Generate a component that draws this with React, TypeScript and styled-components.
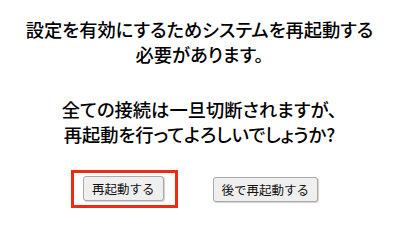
import React from 'react'
import styled, { createGlobalStyle } from 'styled-components'

const GlobalStyle = createGlobalStyle`
  html, body {
    margin: 0;
    padding: 0;
    background: #fff;
  }
  body {
    font-family: "Noto Sans CJK JP", "Liberation Sans", sans-serif;
    color: #000;
  }
`

const Dialog = styled.div`
  width: 399px;
  height: 226px;
  box-sizing: border-box;
  padding-top: 17px;
  display: flex;
  flex-direction: column;
  align-items: center;
`

const Message = styled.p`
  margin: 0 0 30px;
  font-size: 18.3px;
  font-weight: 500;
  line-height: 25px;
  text-align: center;
  font-feature-settings: 'palt';
`

const Actions = styled.div`
  display: flex;
  align-items: center;
  justify-content: center;
  gap: 35px;
  margin-top: -7px;
  padding-right: 10px;
`

const Highlight = styled.div`
  border: 3px solid #ee2a12;
  padding: 3px 11px 4px 9px;
  display: flex;
`

const Button = styled.button`
  height: 25px;
  padding: 0 8px;
  font-family: "Noto Sans CJK JP", "Liberation Sans", sans-serif;
  font-size: 12.5px;
  color: #111;
  background: #efefef;
  border: 1px solid #a9a9a9;
  border-radius: 3px;
  box-shadow: 1px 1px 1px rgba(0, 0, 0, 0.18);
  cursor: pointer;
`

const App: React.FC = () => (
  <>
    <GlobalStyle />
    <Dialog>
      <Message>
        設定を有効にするためシステムを再起動する
        <br />
        必要があります。
      </Message>
      <Message>
        全ての接続は一旦切断されますが、
        <br />
        再起動を行ってよろしいでしょうか?
      </Message>
      <Actions>
        <Highlight>
          <Button>再起動する</Button>
        </Highlight>
        <Button>後で再起動する</Button>
      </Actions>
    </Dialog>
  </>
)

export default App
